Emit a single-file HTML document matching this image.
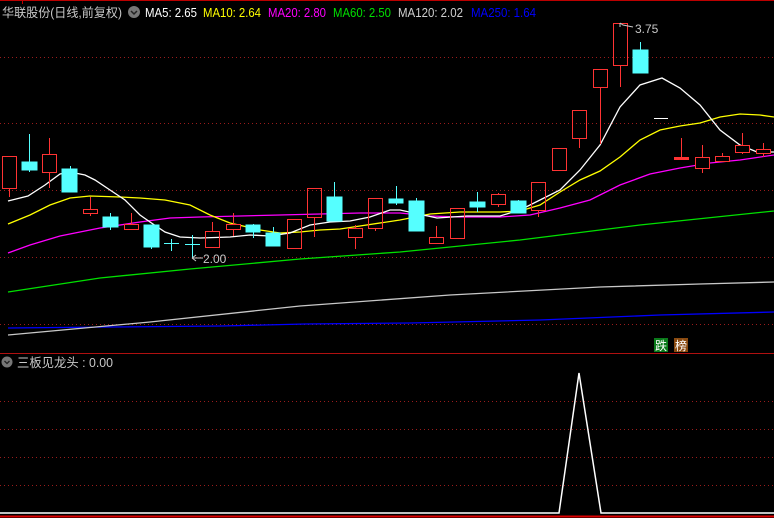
<!DOCTYPE html>
<html><head><meta charset="utf-8"><style>
html,body{margin:0;padding:0;background:#000;width:774px;height:518px;overflow:hidden}
svg{display:block}
text{font-family:"Liberation Sans","Noto Sans CJK SC",sans-serif}
</style></head><body>
<svg width="774" height="518" viewBox="0 0 774 518" xmlns="http://www.w3.org/2000/svg" shape-rendering="crispEdges">
<rect width="774" height="518" fill="#000"/>
<line x1="0" y1="0.5" x2="774" y2="0.5" stroke="#b00" />
<line x1="22.5" y1="0" x2="22.5" y2="4" stroke="#b00"/>
<g stroke="#9a1c1c" stroke-dasharray="1,3">
<line x1="0" y1="57.5" x2="774" y2="57.5"/>
<line x1="0" y1="123.5" x2="774" y2="123.5"/>
<line x1="0" y1="190.5" x2="774" y2="190.5"/>
<line x1="0" y1="257.5" x2="774" y2="257.5"/>
<line x1="0" y1="324.5" x2="774" y2="324.5"/>
<line x1="0" y1="401.5" x2="774" y2="401.5"/>
<line x1="0" y1="429.5" x2="774" y2="429.5"/>
<line x1="0" y1="457.5" x2="774" y2="457.5"/>
<line x1="0" y1="485.5" x2="774" y2="485.5"/>
</g>
<line x1="0" y1="353.5" x2="774" y2="353.5" stroke="#b01010"/>
<line x1="0" y1="516.5" x2="774" y2="516.5" stroke="#d00" stroke-width="2"/>

<g fill="none" shape-rendering="auto" stroke-width="1.3">
<polyline stroke="#0000ff" points="8,328 110,327 222,326 305,324 410,323 540,320 660,315 774,312"/>
<polyline stroke="#c8c8c8" points="8,335 150,322 300,306 450,295 600,287 700,284 774,282"/>
<polyline stroke="#00e000" points="8,292 100,278 190,269 300,259 400,252 520,240 640,225 774,211"/>
<polyline stroke="#ff00ff" points="8,253 30,245 60,236 100,228 140,222 170,218 200,217 240,216 280,215 320,214 360,213 400,213 430,216 460,217 500,217 530,215 560,208 590,200 620,185 650,174 680,168 710,163 740,160 774,155"/>
<polyline stroke="#ffff00" points="8,224 30,215 50,205 70,198 90,196 120,197 140,198 165,200 190,205 210,215 230,223 260,230 280,233 300,232 320,230 340,229 360,226 400,220 430,214 460,212 500,212 520,211 540,205 560,192 580,180 600,171 620,157 640,140 660,130 680,126 700,123 720,117 740,114 760,115 774,117"/>
<polyline stroke="#ffffff" points="8,201 28,196 45,185 60,174 70,172 85,175 95,180 110,190 125,200 140,215 150,222 165,232 180,237 200,238 230,237 250,235 270,236 290,233 310,225 330,222 350,221 370,217 390,210 400,210 437,218 467,216 500,216 520,210 540,200 560,190 580,170 600,145 620,107 640,85 662,78 680,88 700,105 720,130 740,145 757,152 774,152"/>
</g>

<g stroke="#ff3333" fill="none">
<line x1="9.5" y1="188" x2="9.5" y2="197"/><rect x="2.5" y="156.5" width="14" height="32"/>
<line x1="49.5" y1="138" x2="49.5" y2="154"/><line x1="49.5" y1="172" x2="49.5" y2="188"/><rect x="42.5" y="154.5" width="14" height="18"/>
<line x1="90.5" y1="197" x2="90.5" y2="216"/><rect x="83.5" y="209.5" width="14" height="4" fill="#000"/>
<line x1="131.5" y1="213" x2="131.5" y2="229"/><rect x="124.5" y="224.5" width="14" height="5" fill="#000"/>
<line x1="212.5" y1="222" x2="212.5" y2="231"/><rect x="205.5" y="231.5" width="14" height="16"/>
<line x1="233.5" y1="213" x2="233.5" y2="236"/><rect x="226.5" y="224.5" width="14" height="5" fill="#000"/>
<rect x="287.5" y="219.5" width="14" height="29"/>
<line x1="314.5" y1="217" x2="314.5" y2="237"/><rect x="307.5" y="188.5" width="14" height="29"/>
<line x1="355.5" y1="225" x2="355.5" y2="249"/><rect x="348.5" y="228.5" width="14" height="9" fill="#000"/>
<line x1="375.5" y1="228" x2="375.5" y2="231"/><rect x="368.5" y="198.5" width="14" height="30"/>
<line x1="436.5" y1="226" x2="436.5" y2="237"/><rect x="429.5" y="237.5" width="14" height="6"/>
<line x1="457.5" y1="238" x2="457.5" y2="239"/><rect x="450.5" y="208.5" width="14" height="30"/>
<line x1="498.5" y1="193" x2="498.5" y2="207"/><rect x="491.5" y="194.5" width="14" height="10" fill="#000"/>
<line x1="538.5" y1="210" x2="538.5" y2="217"/><rect x="531.5" y="182.5" width="14" height="28"/>
<line x1="559.5" y1="170" x2="559.5" y2="171"/><rect x="552.5" y="148.5" width="14" height="22"/>
<line x1="579.5" y1="138" x2="579.5" y2="148"/><rect x="572.5" y="110.5" width="14" height="28"/>
<line x1="600.5" y1="87" x2="600.5" y2="144"/><rect x="593.5" y="69.5" width="14" height="18"/>
<line x1="620.5" y1="65" x2="620.5" y2="87"/><rect x="613.5" y="23.5" width="14" height="42"/>
<line x1="681.5" y1="138" x2="681.5" y2="157"/><rect x="674.5" y="157.5" width="14" height="2" fill="#ff3333"/>
<line x1="702.5" y1="145" x2="702.5" y2="173"/><rect x="695.5" y="157.5" width="14" height="11" fill="#000"/>
<line x1="722.5" y1="153" x2="722.5" y2="156"/><rect x="715.5" y="156.5" width="14" height="5" fill="#000"/>
<line x1="742.5" y1="133" x2="742.5" y2="154"/><rect x="735.5" y="145.5" width="14" height="7" fill="#000"/>
<line x1="763.5" y1="143" x2="763.5" y2="157"/><rect x="756.5" y="149.5" width="14" height="4" fill="#000"/>
</g>
<g stroke="#55ffff" fill="#55ffff">
<line x1="29.5" y1="134" x2="29.5" y2="172"/><rect x="22" y="162" width="15" height="8"/>
<line x1="70.5" y1="166" x2="70.5" y2="192"/><rect x="62" y="169" width="15" height="23"/>
<line x1="110.5" y1="213" x2="110.5" y2="230"/><rect x="103" y="217" width="15" height="10"/>
<line x1="151.5" y1="225" x2="151.5" y2="249"/><rect x="144" y="225" width="15" height="22"/>
<line x1="164" y1="243.5" x2="179" y2="243.5"/><line x1="171.5" y1="239" x2="171.5" y2="251"/>
<line x1="185" y1="244.5" x2="200" y2="244.5"/><line x1="192.5" y1="235" x2="192.5" y2="258"/>
<line x1="253.5" y1="224" x2="253.5" y2="238"/><rect x="246" y="225" width="14" height="7"/>
<line x1="273.5" y1="227" x2="273.5" y2="246"/><rect x="266" y="233" width="14" height="13"/>
<line x1="334.5" y1="182" x2="334.5" y2="221"/><rect x="327" y="197" width="15" height="24"/>
<line x1="396.5" y1="186" x2="396.5" y2="205"/><rect x="389" y="199" width="14" height="4"/>
<line x1="416.5" y1="198" x2="416.5" y2="231"/><rect x="409" y="201" width="15" height="30"/>
<line x1="477.5" y1="192" x2="477.5" y2="212"/><rect x="470" y="202" width="15" height="5"/>
<line x1="518.5" y1="200" x2="518.5" y2="213"/><rect x="511" y="201" width="15" height="12"/>
<line x1="640.5" y1="42" x2="640.5" y2="50"/><rect x="633" y="50" width="15" height="23"/>
</g>
<line x1="654" y1="118.5" x2="668" y2="118.5" stroke="#fff"/>

<g fill="#c8c8c8" font-size="12">
<text x="203" y="263">2.00</text>
<text x="635" y="33">3.75</text>
</g>
<g stroke="#c8c8c8" fill="none" shape-rendering="auto">
<path d="M192,258 L203,258 M192,258 l4,-3 M192,258 l4,3"/>
<path d="M620,23 l3,2 l10,2 M620,23 l0,4"/>
</g>

<g font-size="12.5" shape-rendering="auto">
<text x="2" y="17" fill="#c8c8c8" textLength="120" lengthAdjust="spacingAndGlyphs">华联股份(日线,前复权)</text>
<circle cx="134" cy="12" r="6" fill="#777"/>
<path d="M131,11 l3,3 l3,-3" stroke="#222" stroke-width="1.5" fill="none"/>
<text x="145" y="17" fill="#fff" textLength="52" lengthAdjust="spacingAndGlyphs">MA5: 2.65</text>
<text x="203" y="17" fill="#ffff00" textLength="58" lengthAdjust="spacingAndGlyphs">MA10: 2.64</text>
<text x="268" y="17" fill="#ff00ff" textLength="58" lengthAdjust="spacingAndGlyphs">MA20: 2.80</text>
<text x="333" y="17" fill="#00e000" textLength="58" lengthAdjust="spacingAndGlyphs">MA60: 2.50</text>
<text x="398" y="17" fill="#d0d0d0" textLength="65" lengthAdjust="spacingAndGlyphs">MA120: 2.02</text>
<text x="471" y="17" fill="#0000ff" textLength="65" lengthAdjust="spacingAndGlyphs">MA250: 1.64</text>
</g>
<g shape-rendering="auto">
<circle cx="7" cy="362" r="5.5" fill="#777"/>
<path d="M4.5,361 l2.5,2.5 l2.5,-2.5" stroke="#222" stroke-width="1.3" fill="none"/>
<text x="17" y="367" font-size="12.5" fill="#c8c8c8" textLength="96" lengthAdjust="spacingAndGlyphs">三板见龙头 : 0.00</text>
</g>
<rect x="654" y="338" width="14" height="14" fill="#0a7a1a"/>
<text x="655" y="350" font-size="12" fill="#fff">跌</text>
<rect x="674" y="338" width="14" height="14" fill="#8a4a10"/>
<text x="675" y="350" font-size="12" fill="#fff">榜</text>

<polyline points="0,513 559,513 579,373 601,513 774,513" fill="none" stroke="#fff" stroke-width="1.5" shape-rendering="auto"/>
</svg>
</body></html>
